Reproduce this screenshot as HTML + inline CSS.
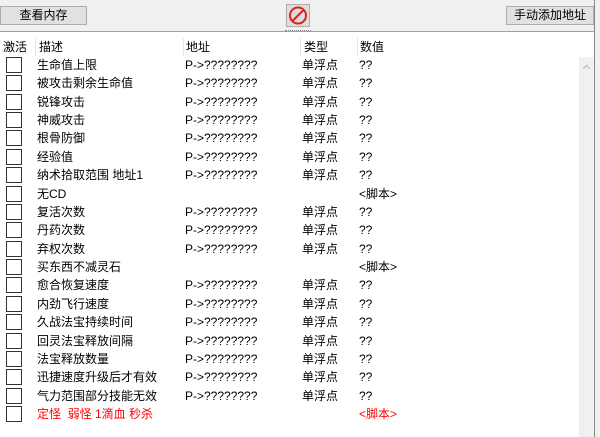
<!DOCTYPE html>
<html><head><meta charset="utf-8"><style>
*{margin:0;padding:0;box-sizing:border-box}
body{width:600px;height:437px;background:#fff;font-family:"Liberation Sans","Noto Sans CJK SC",sans-serif;font-size:12px;color:#000;position:relative;overflow:hidden}
.top{position:absolute;left:0;top:0;width:600px;height:32px;background:#f0f0f0;border-bottom:1px solid #a0a0a0}
.btn{position:absolute;background:#e1e1e1;border:1px solid #adadad;text-align:center;line-height:17px;font-size:12px}
.t{position:absolute;white-space:nowrap;line-height:14px}
.cb{position:absolute;left:6px;width:16px;height:16px;border:1px solid #333;background:#fff}
.sep{position:absolute;top:38px;width:1px;height:18px;background:#e5e5e5}
.red{color:#f00}
</style></head><body>
<div class="top">
<div class="btn" style="left:0;top:6px;width:87px;height:19px">查看内存</div>
<div class="btn" style="left:286px;top:4px;width:24px;height:23px;background:#ddd">
<svg width="22" height="21" viewBox="0 0 22 21" style="position:absolute;left:0;top:0"><circle cx="11" cy="10.5" r="8" fill="none" stroke="#e02020" stroke-width="2"/><line x1="5.5" y1="16" x2="16.5" y2="5" stroke="#e02020" stroke-width="2"/></svg></div>
<div class="btn" style="left:506px;top:6px;width:88px;height:19px">手动添加地址</div>
<div style="position:absolute;left:285px;top:30px;width:26px;height:1px;border-top:1px dotted #888"></div>
</div>
<div style="position:absolute;left:594px;top:0;width:6px;height:437px;background:#f0f0f0;border-left:1px solid #888"></div>
<div style="position:absolute;left:579px;top:57px;width:15px;height:380px;background:#f0f0f0"></div>
<svg style="position:absolute;left:581px;top:63px" width="11" height="8" viewBox="0 0 11 8"><path d="M2 6 L5.5 2.5 L9 6" fill="none" stroke="#bbb" stroke-width="1.2"/></svg>
<div class="sep" style="left:35px"></div><div class="sep" style="left:183px"></div><div class="sep" style="left:300px"></div><div class="sep" style="left:357px"></div>
<div class="t" style="left:3px;top:40px">激活</div>
<div class="t" style="left:39px;top:40px">描述</div>
<div class="t" style="left:186px;top:40px">地址</div>
<div class="t" style="left:304px;top:40px">类型</div>
<div class="t" style="left:360px;top:40px">数值</div>
<div id="rows"></div>
<script>
var d=[["生命值上限",1],["被攻击剩余生命值",1],["锐锋攻击",1],["神威攻击",1],["根骨防御",1],["经验值",1],["纳术拾取范围 地址1",1],["无CD",0],["复活次数",1],["丹药次数",1],["弃权次数",1],["买东西不减灵石",0],["愈合恢复速度",1],["内劲飞行速度",1],["久战法宝持续时间",1],["回灵法宝释放间隔",1],["法宝释放数量",1],["迅捷速度升级后才有效",1],["气力范围部分技能无效",1],["定怪&nbsp;&nbsp;弱怪 1滴血 秒杀",2]];
var h="";
d.forEach(function(r,i){var y=57+i*18.37;var ty=y+1;
h+='<div class="cb" style="top:'+y+'px"></div>';
var c=r[1]==2?' red':'';
h+='<div class="t'+c+'" style="left:37px;top:'+ty+'px">'+r[0]+'</div>';
if(r[1]==1){h+='<div class="t" style="left:185px;top:'+ty+'px">P-&gt;????????</div><div class="t" style="left:302px;top:'+ty+'px">单浮点</div><div class="t" style="left:359px;top:'+ty+'px">??</div>';}
else h+='<div class="t'+c+'" style="left:359px;top:'+ty+'px">&lt;脚本&gt;</div>';
});
document.getElementById("rows").innerHTML=h;
</script>
</body></html>
